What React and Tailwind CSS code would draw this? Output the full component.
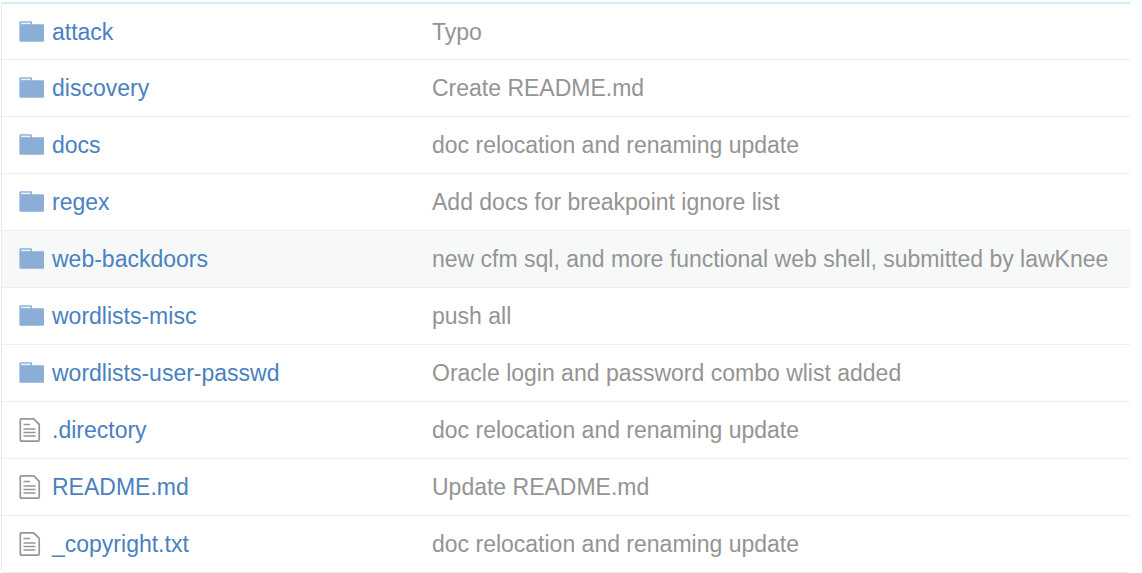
const entries = [
  { name: "attack", message: "Typo", folder: true },
  { name: "discovery", message: "Create README.md", folder: true },
  { name: "docs", message: "doc relocation and renaming update", folder: true },
  { name: "regex", message: "Add docs for breakpoint ignore list", folder: true },
  { name: "web-backdoors", message: "new cfm sql, and more functional web shell, submitted by lawKnee", folder: true, active: true },
  { name: "wordlists-misc", message: "push all", folder: true },
  { name: "wordlists-user-passwd", message: "Oracle login and password combo wlist added", folder: true },
  { name: ".directory", message: "doc relocation and renaming update" },
  { name: "README.md", message: "Update README.md" },
  { name: "_copyright.txt", message: "doc relocation and renaming update" },
];

function FolderIcon() {
  return (
    <svg className="block h-6 w-[25px]" viewBox="0 0 25 24" aria-hidden="true">
      <path fill="#8aaed6" d="M1.7 1.2h10.100a1.300 1.300 0 0 1 1.300 1.300V4.200h10.600A1.300 1.300 0 0 1 25 5.500v14.900a1.300 1.300 0 0 1-1.300 1.300H1.700a1.300 1.300 0 0 1-1.300-1.300V2.500a1.300 1.300 0 0 1 1.300-1.300z" />
      <path fill="#e9f1f9" d="M2 2.600h9.600V4.200H2z" />
    </svg>
  );
}

function FileIcon() {
  return (
    <svg className="block h-6 w-[25px]" viewBox="0 0 25 24" fill="none" stroke="#969696" aria-hidden="true">
      <path strokeWidth="1.700" strokeLinejoin="round" d="M2.300 .9h12.400l5.500 5.500v15.700a1 1 0 0 1-1 1H2.300a1 1 0 0 1-1-1V1.900a1 1 0 0 1 1-1z" />
      <path strokeWidth="1.600" d="M4.500 6.500h6.500M4.500 11h12M4.500 14.500h12M4.500 18h12" />
    </svg>
  );
}

export default function App() {
  return (
    <main className="bg-white pt-0.5 pr-3 pl-px font-['Liberation_Sans',Arial,sans-serif] text-[23px] leading-7">
      <table className="w-full table-fixed border-separate border-spacing-0 rounded-b border-b border-l border-[#e6ebed] text-left">
        <colgroup>
          <col className="w-[418px]" />
          <col />
        </colgroup>
        <tbody>
          {entries.map((entry, index) => {
            const line = index === 0 ? "border-t-2 border-[#d4eef8]" : "border-t border-[#eeeeee]";
            return (
              <tr key={entry.name} className={entry.active ? "bg-[#f7f9f9]" : ""}>
                <th scope="row" className={`h-[57px] p-0 pl-[17px] font-normal ${line}`}>
                  <div className="flex items-center gap-2">
                    <span className="w-[25px] shrink-0">{entry.folder ? <FolderIcon /> : <FileIcon />}</span>
                    <a href={`#${entry.name}`} className="text-[#4a81c0] hover:underline">{entry.name}</a>
                  </div>
                </th>
                <td className={`h-[57px] truncate p-0 pl-3 text-[#949494] ${line}`}>{entry.message}</td>
              </tr>
            );
          })}
        </tbody>
      </table>
    </main>
  );
}
